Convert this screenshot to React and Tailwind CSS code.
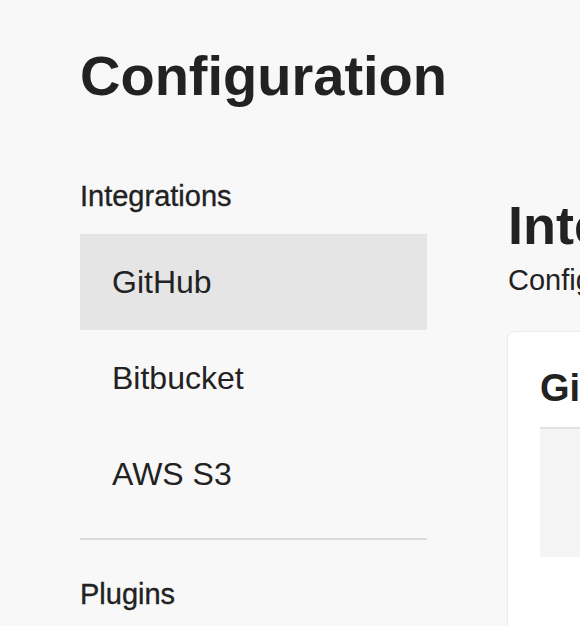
import React from "react";

const integrations = ["GitHub", "Bitbucket", "AWS S3"];

function Sidebar({ active }) {
  return (
    <aside className="w-[347px] shrink-0">
      <h2 className="text-[29px] leading-[36px] text-[#222] [-webkit-text-stroke:0.35px_#222]">Integrations</h2>
      <nav className="mt-[20px] flex flex-col">
        {integrations.map((name) => (
          <a
            key={name}
            href="#"
            className={`block h-[96px] pl-[32px] text-[32px] leading-[96px] text-[#222] ${
              name === active ? "bg-[#e5e5e5]" : ""
            }`}
          >
            {name}
          </a>
        ))}
      </nav>
      <div className="mt-[16px] h-[2px] bg-[#dcdcdc]" />
      <h2 className="mt-[36px] text-[29px] leading-[36px] text-[#222] [-webkit-text-stroke:0.35px_#222]">Plugins</h2>
    </aside>
  );
}

export default function App() {
  return (
    <div
      className="min-h-screen w-full overflow-hidden bg-[#f8f8f8] text-[#222]"
      style={{ fontFamily: '"Liberation Sans", Arial, sans-serif' }}
    >
      <div className="w-max pl-[80px] pt-[48px]">
        <h1 className="text-[56px] leading-[56px] font-bold">Configuration</h1>

        <div className="mt-[74px] flex gap-[80px]">
          <Sidebar active="GitHub" />

          <main className="w-[640px] shrink-0 pt-[20px]">
            <h2 className="pl-[1px] text-[54px] leading-[54px] font-bold">Integrations</h2>
            <p className="mt-[10px] pl-[1px] text-[29px] leading-[36px]">Configure your external integrations</p>

            <section className="mt-[33px] rounded-[8px] border border-[#ececec] bg-white pl-[32px] pt-[34px] pb-[120px] shadow-[0_1px_2px_rgba(0,0,0,0.04)]">
              <h3 className="text-[38px] leading-[44px] font-bold">GitHub</h3>
              <div className="mt-[17px] border-t-2 border-[#e2e2e2] bg-[#f5f5f5] h-[130px]" />
            </section>
          </main>
        </div>
      </div>
    </div>
  );
}
